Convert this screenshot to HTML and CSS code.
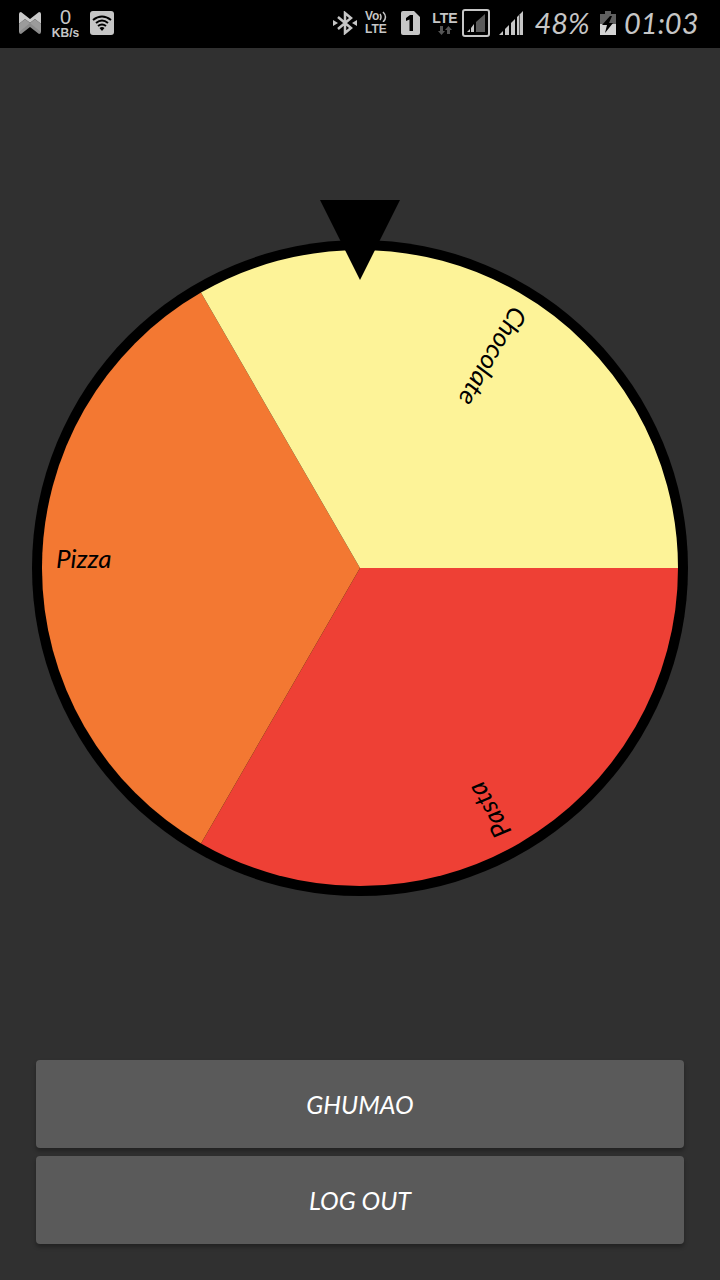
FILE: index.html
```html
<!DOCTYPE html>
<html lang="en">
<head>
<meta charset="utf-8">
<meta name="viewport" content="width=device-width, initial-scale=1">
<title>Ghumao</title>
<link rel="stylesheet" href="styles.css">
</head>
<body>
<header class="status">
  <div class="group">
    <svg class="icon" width="22" height="22" viewBox="0 0 22 22" aria-hidden="true">
      <path fill="#c9c9c9" d="M0 2Q0 0 2 0L11 7 20 0Q22 0 22 2V12L16 7 11 11 6 7 0 12Z"/>
      <path fill="#8b8b8b" d="M0 12L6 7 11 11 16 7 22 12V20Q22 22 20 22L11 15 2 22Q0 22 0 20Z"/>
      <path fill="#acacac" d="M0 12L6 7 11 11 5 16 0 20ZM22 12L16 7 11 11 17 16 22 20Z" opacity=".5"/>
    </svg>
    <div class="speed"><span class="speed-value">0</span><span class="speed-unit">KB/s</span></div>
    <svg class="icon" width="24" height="24" viewBox="0 0 24 24" aria-hidden="true">
      <rect width="24" height="24" rx="3" fill="#c6c6c6"/>
      <g fill="none" stroke="#000" stroke-width="2">
        <path d="M3 9Q12 2 21 9M6 12Q12 7 18 12M8 15Q12 12 16 15"/>
      </g>
      <path d="M9.500 17Q12 15 14.500 17L12 20Z"/>
    </svg>
  </div>
  <div class="group group-end">
    <svg class="icon" width="24" height="24" viewBox="0 0 24 24" aria-hidden="true">
      <path fill="none" stroke="#c6c6c6" stroke-width="2.500" d="M5 6L18 17 12 22V2L18 7 5 18"/>
      <path fill="#c6c6c6" d="M0 9L5 12 0 15ZM24 9L19 12 24 15Z"/>
    </svg>
    <div class="volte"><span>Vo<svg class="waves" width="8" height="11" viewBox="0 0 8 11" aria-hidden="true"><path fill="none" stroke="#c6c6c6" stroke-width="1.500" d="M1 3Q3 6 1 9M4 1Q9 6 4 11"/></svg></span><span>LTE</span></div>
    <svg class="icon sim" width="19" height="24" viewBox="0 0 19 24" aria-hidden="true">
      <path fill="#c6c6c6" d="M2 0H13L19 6V22Q19 24 17 24H2Q0 24 0 22V2Q0 0 2 0Z"/>
      <path d="M5 7L9 4H12V20H8.500V8.500L5 10Z"/>
    </svg>
    <div class="lte"><span>LTE</span>
      <svg width="14" height="9" viewBox="0 0 14 9" aria-hidden="true"><path fill="#555" d="M2 0H5V5H7L3.500 9 0 5H2ZM9 8H12V4H14L10.500 0 7 4H9Z"/></svg>
    </div>
    <svg class="icon" width="28" height="28" viewBox="0 0 28 28" aria-hidden="true">
      <rect x="1" y="1" width="26" height="26" rx="2" fill="none" stroke="#c6c6c6" stroke-width="2"/>
      <path fill="#c6c6c6" d="M5 23L8 20V23ZM9 19L12 15V23H9Z"/>
      <path fill="#5a5a5a" d="M14 13L23 5V23H14Z"/>
    </svg>
    <svg class="icon signal" width="24" height="24" viewBox="0 0 24 24" aria-hidden="true">
      <path fill="#c6c6c6" d="M0 24L4 20V24ZM6 18L10 14V24H6ZM12 12L16 8V24H12ZM18 6L24 0V24H18Z"/>
      <path stroke="#555" d="M20.500 3V24"/>
    </svg>
    <span class="percent">48%</span>
    <svg class="icon battery" width="16" height="24" viewBox="0 0 16 24" aria-hidden="true">
      <path fill="#606060" d="M0 3H5V0H11V3H16V13H0Z"/>
      <path fill="#d4d4d4" d="M0 13H16V24H0Z"/>
      <path d="M10 5L2 14H7L5 22 13 12H9L12 5Z"/>
    </svg>
    <time class="clock">01:03</time>
  </div>
</header>
<main class="screen">
  <section class="stage">
    <svg class="wheel" viewBox="0 0 656 696" role="img" aria-label="Wheel with Chocolate, Pasta and Pizza">
      <g transform="translate(328 368)">
        <circle r="328"/>
        <path fill="#ee4035" d="M0 0H318A318 318 0 0 1 -159 275.400Z"/>
        <path fill="#f37832" d="M0 0L-159 275.400A318 318 0 0 1 -159 -275.400Z"/>
        <path fill="#fdf398" d="M0 0L-159 -275.400A318 318 0 0 1 318 0Z"/>
        <text class="label" x="-304" transform="rotate(120)">Chocolate</text>
        <text class="label" x="-304">Pizza</text>
        <text class="label" x="-304" transform="rotate(240)">Pasta</text>
      </g>
      <path d="M288 0H368L328 80Z"/>
    </svg>
  </section>
  <div class="actions">
    <button class="action" type="button">GHUMAO</button>
    <button class="action" type="button">LOG OUT</button>
  </div>
</main>
</body>
</html>
```
FILE: styles.css
```css
* {
  box-sizing: border-box;
}

body {
  margin: 0;
  min-height: 100vh;
  display: flex;
  flex-direction: column;
  background: #303030;
  color: #fff;
  font-family: Lato, "Liberation Sans", sans-serif;
}

.status {
  display: flex;
  justify-content: space-between;
  align-items: center;
  height: 48px;
  padding: 0 22px 2px 19px;
  background: #000;
  color: #c6c6c6;
}

.group {
  display: flex;
  align-items: center;
  gap: 11px;
}

.group-end {
  gap: 8px;
}

.icon {
  flex: none;
}

.speed,
.volte,
.lte {
  display: flex;
  flex-direction: column;
  align-items: center;
  font-family: "Liberation Sans", Arial, sans-serif;
  font-weight: bold;
}

.speed {
  width: 27px;
}

.speed-value {
  font-size: 20px;
  font-weight: normal;
  line-height: 19px;
}

.speed-unit {
  font-size: 12px;
  line-height: 12px;
}

.volte {
  width: 24px;
  align-items: flex-start;
  font-size: 12px;
  line-height: 13px;
}

.volte span {
  display: flex;
  align-items: center;
}

.waves {
  flex: none;
}

.lte {
  width: 26px;
  margin: 0 -4px 0 4px;
  gap: 1px;
  font-size: 14px;
  line-height: 14px;
}

.sim {
  margin-left: 4px;
}

.signal {
  margin-left: 1px;
}

.percent,
.clock {
  font-size: 29px;
  font-style: italic;
  line-height: 32px;
  text-align: center;
}

.percent {
  width: 62px;
}

.battery {
  margin-left: -1px;
}

.clock {
  width: 74px;
}

.screen {
  flex: 1;
  display: flex;
  flex-direction: column;
}

.stage {
  flex: 1;
  display: flex;
  align-items: center;
  justify-content: center;
  padding: 0 32px;
}

.wheel {
  display: block;
  width: 100%;
  max-width: 800px;
}

.label {
  font-size: 26px;
  font-style: italic;
}

.actions {
  display: flex;
  flex-direction: column;
  gap: 8px;
  padding: 12px 36px 36px;
}

.action {
  height: 88px;
  border: 0;
  border-radius: 4px;
  background: #5a5a5a;
  color: #fff;
  font: italic 25px Lato, "Liberation Sans", sans-serif;
  box-shadow: 0 3px 4px rgba(0, 0, 0, 0.3);
}
```
